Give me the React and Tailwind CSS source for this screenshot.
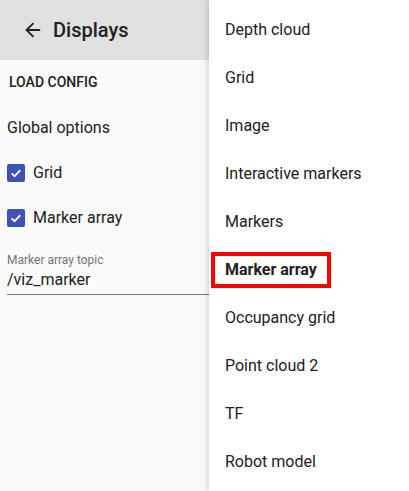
import { ArrowLeft } from "lucide-react";

const items = [
  "Depth cloud",
  "Grid",
  "Image",
  "Interactive markers",
  "Markers",
  "Marker array",
  "Occupancy grid",
  "Point cloud 2",
  "TF",
  "Robot model",
];

const Check = ({ label }) => (
  <div className="flex items-center h-6">
    <div className="ml-[7px] w-[18px] h-[18px] rounded-[2px] bg-[#3f51b5] flex items-center justify-center">
      <svg width="14" height="14" viewBox="0 0 24 24">
        <path d="M4.5 12.5l5 5L19.5 7" fill="none" stroke="white" strokeWidth="3" />
      </svg>
    </div>
    <span className="ml-2 text-base text-[#212121]">{label}</span>
  </div>
);

export default function App() {
  return (
    <div
      className="flex w-[409px] h-[491px] overflow-hidden bg-[#fafafa]"
      style={{ fontFamily: "Roboto, 'Liberation Sans', sans-serif" }}
    >
      <div className="w-[209px] shrink-0">
        <div className="h-[60px] bg-[#e0e0e0] flex items-center">
          <ArrowLeft className="ml-[22px] w-[22px] h-[22px] text-[#212121]" strokeWidth={2} />
          <span className="ml-[9px] text-[20px] font-medium text-[#212121]">Displays</span>
        </div>
        <div className="mt-3 ml-[9px] text-sm font-medium leading-5 text-[#212121]">LOAD CONFIG</div>
        <div className="mt-[24px] ml-[7px] text-base leading-6 text-[#212121]">Global options</div>
        <div className="mt-[21px]">
          <Check label="Grid" />
        </div>
        <div className="mt-[21px]">
          <Check label="Marker array" />
        </div>
        <div className="mt-[22px] ml-[7px] text-xs leading-4 text-[#757575]">Marker array topic</div>
        <div className="ml-[7px] border-b border-[#757575] pb-[2px] text-base leading-6 text-[#212121]">
          /viz_marker
        </div>
      </div>
      <div className="w-[200px] shrink-0 bg-white shadow-[-2px_0_5px_rgba(0,0,0,0.15)] pt-[6px]">
        {items.map((t) =>
          t === "Marker array" ? (
            <div key={t} className="h-12 flex items-center">
              <div className="ml-[2px] border-4 border-[#ff0000] h-9 flex items-center px-[10px] text-base font-bold text-[#212121]">
                {t}
              </div>
            </div>
          ) : (
            <div key={t} className="h-12 flex items-center pl-4 text-base text-[#212121]">
              {t}
            </div>
          )
        )}
      </div>
    </div>
  );
}
